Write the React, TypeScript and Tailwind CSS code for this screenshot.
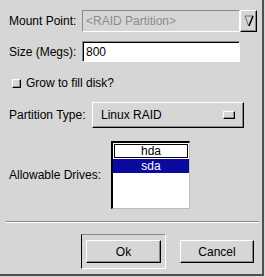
const raised =
  "border-t border-l border-t-white border-l-white border-r border-b border-r-black border-b-black shadow-[inset_-1px_-1px_0_#8a8a8a]";
const sunken =
  "border-t border-l border-t-[#8a8a8a] border-l-[#8a8a8a] border-r border-b border-r-white border-b-white";

export default function App() {
  return (
    <div className="w-[265px] h-[277px] bg-[#d6d6d6] text-[12px] leading-none text-black font-['Liberation_Sans',Arial,sans-serif]">
      <div className="w-[264px] h-[276px] border-r-2 border-b-2 border-r-[#505050] border-b-[#505050] flex flex-col">
        {/* mount point */}
        <div className="flex items-center pl-[9px] mt-[10px] h-[22px]">
          <span className="w-[73px]">Mount Point:</span>
          <div className={`w-[158px] h-[22px] flex items-center pl-[3px] text-[#8c8c8c] ${sunken}`}>
            &lt;RAID Partition&gt;
          </div>
          <div className={`w-[17px] h-[22px] flex items-center justify-center ${raised}`}>
            <svg width="10" height="12" viewBox="0 0 10 12">
              <path d="M1 1 H9" stroke="#6e6e6e" strokeWidth="1" />
              <path d="M1 1 L4.6 11" stroke="#6e6e6e" strokeWidth="1" fill="none" />
              <path d="M9 1 L5 11" stroke="#000" strokeWidth="1.5" fill="none" />
            </svg>
          </div>
        </div>

        {/* size */}
        <div className="flex items-center pl-[9px] mt-[9px] h-[21px]">
          <span className="w-[73px]">Size (Megs):</span>
          <div className={`w-[158px] h-[21px] bg-white flex items-center pl-[3px] shadow-[inset_1px_1px_0_#000] ${sunken}`}>
            800
          </div>
        </div>

        {/* grow */}
        <div className="flex items-center pl-[12px] mt-[14px] h-[14px]">
          <div className={`w-[9px] h-[9px] bg-[#d6d6d6] ${raised}`} />
          <span className="ml-[5px]">Grow to fill disk?</span>
        </div>

        {/* partition type */}
        <div className="flex items-center pl-[9px] mt-[12px] h-[26px]">
          <span className="w-[83px]">Partition Type:</span>
          <div className={`w-[152px] h-[26px] flex items-center pl-[8px] pr-[8px] ${raised}`}>
            <span className="flex-1">Linux RAID</span>
            <div className={`w-[12px] h-[8px] ${raised}`} />
          </div>
        </div>

        {/* allowable drives */}
        <div className="flex items-center pl-[9px] mt-[13px] h-[68px]">
          <span className="w-[102px]">Allowable Drives:</span>
          <div className="w-[79px] h-[68px] bg-white border-t-2 border-l-2 border-t-black border-l-black border-r border-b border-r-[#bdbdbd] border-b-[#bdbdbd] pt-px">
            <div className="h-[14px] mx-px border border-black flex items-center justify-center">hda</div>
            <div className="h-[14px] mt-px bg-[#0a0a9e] text-white flex items-center justify-center">sda</div>
          </div>
        </div>

        {/* separator */}
        <div className="ml-[6px] w-[253px] mt-[12px] border-t border-t-[#8a8a8a] border-b border-b-white" />

        {/* buttons */}
        <div className="flex items-center pl-[81px] mt-[11px]">
          <div className="w-[85px] h-[35px] flex items-center justify-center border-t border-l border-t-[#8a8a8a] border-l-black border-r border-b border-r-white border-b-white">
            <div className={`w-[75px] h-[23px] flex items-center justify-center ${raised}`}>Ok</div>
          </div>
          <div className={`ml-[14px] w-[74px] h-[23px] flex items-center justify-center ${raised}`}>Cancel</div>
        </div>
      </div>
    </div>
  );
}
